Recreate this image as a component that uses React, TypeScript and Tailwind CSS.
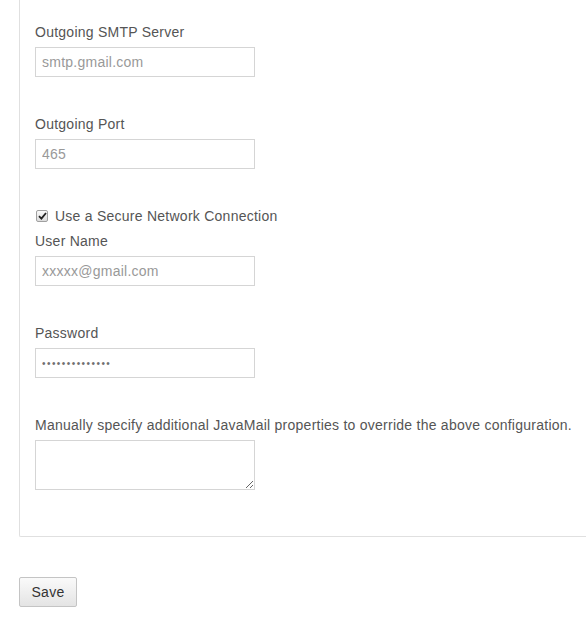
import React from "react";

const font = { fontFamily: '"Liberation Sans", Arial, sans-serif' };

function Field({ label, placeholder, type = "text", value, last }: { label: string; placeholder?: string; type?: string; value?: string; last?: boolean }) {
  const isPw = type === "password";
  return (
    <div className={last ? "" : "mb-[37px]"}>
      <label className="block h-5 leading-5 mb-[5px] text-[14px] text-[#555] tracking-[0.25px]">{label}</label>
      <input
        type={type}
        placeholder={placeholder}
        defaultValue={value}
        className={
          isPw
            ? "block w-[220px] h-[30px] border border-[#d5d5d5] bg-white px-[6px] text-[10px] tracking-[1.45px] text-[#707070] outline-none"
            : "block w-[220px] h-[30px] border border-[#d5d5d5] bg-white px-[6px] text-[14px] tracking-[0.25px] text-[#555] placeholder:text-[#999] outline-none"
        }
        style={font}
      />
    </div>
  );
}

export default function App() {
  return (
    <div className="w-[586px] h-[618px] overflow-hidden bg-white text-[14px] text-[#555] tracking-[0.25px]" style={font}>
      <div className="ml-[19px] border-l border-b border-[#e0e0e0] rounded-bl-[2px] pl-[15px] pt-[22px] pb-[46px]">
        <Field label="Outgoing SMTP Server" placeholder="smtp.gmail.com" />
        <Field label="Outgoing Port" placeholder="465" />
        <div className="flex items-center h-5 mb-[5px]">
          <span className="ml-[1px] mr-[7px] flex items-center justify-center w-[12px] h-[12px] border border-[#a0a0a0] rounded-[2px] bg-linear-to-b from-[#fafafa] to-[#dcdcdc]">
            <svg width="9" height="8" viewBox="0 0 9 8">
              <path d="M1 4.2 L3.4 6.6 L8 1" fill="none" stroke="#222" strokeWidth="1.8" />
            </svg>
          </span>
          <span className="leading-5">Use a Secure Network Connection</span>
        </div>
        <Field label="User Name" placeholder="xxxxx@gmail.com" />
        <Field label="Password" type="password" value="12345678901234" />
        <div>
          <label className="block h-5 leading-5 mb-[5px] whitespace-nowrap">Manually specify additional JavaMail properties to override the above configuration.</label>
          <textarea className="block w-[220px] h-[50px] border border-[#d5d5d5] bg-white px-[6px] outline-none" style={font} />
        </div>
      </div>
      <button
        className="mt-[40px] ml-[19px] w-[58px] h-[30px] border border-[#c4c4c4] rounded-[2px] bg-linear-to-b from-[#fafafa] to-[#e4e4e4] text-[14px] text-[#333]"
        style={font}
      >
        Save
      </button>
    </div>
  );
}
